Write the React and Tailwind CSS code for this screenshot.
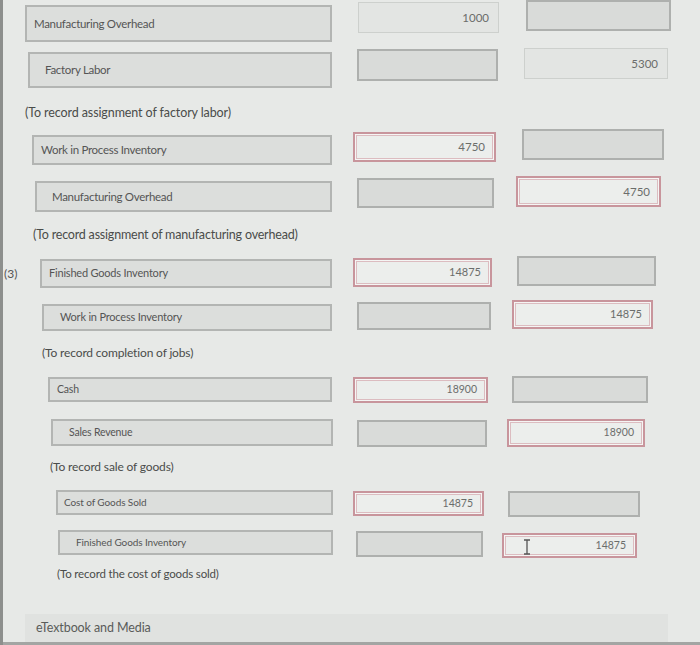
import React from "react";

const kinds = {
  grey: "bg-[#d9dbd9] border-2 border-[#aeb0ae]",
  light: "bg-[#e3e5e3] border border-[#cdd0cd]",
  red: "bg-[#eceeec] border-2 border-[#c8959c] shadow-[inset_0_0_0_1px_#f5f5f4,inset_0_0_0_2px_#dcbcc0]",
};

const Amount = ({ kind, value, cursor, className }) => (
  <div className={`relative shrink-0 flex items-center justify-end pr-[9px] text-[#6b6d6b] ${kinds[kind]} ${className}`}>
    {cursor && (
      <svg className="absolute left-[19px] top-[4px]" width="8" height="16" viewBox="0 0 8 16">
        <path d="M1 1h6M4 1v14M1 15h6" stroke="#555" strokeWidth="1.3" fill="none" />
      </svg>
    )}
    {value}
  </div>
);

const rows = [
  {
    top: "mt-0", lead: "w-[25px]", label: "Manufacturing Overhead",
    box: "mt-[5px] w-[307px] h-[37px] pl-[7px] text-[11.5px] tracking-[-0.3px]",
    debit: { kind: "light", value: "1000", cls: "mt-[2px] ml-[26px] w-[141px] h-[31px] text-[11.5px]" },
    credit: { kind: "grey", cls: "mt-0 ml-[27px] w-[145px] h-[31px]" },
  },
  {
    top: "mt-[6px]", lead: "w-[28px]", label: "Factory Labor",
    box: "mt-[4px] w-[304px] h-[36px] pl-[15px] text-[11.5px] tracking-[-0.3px]",
    debit: { kind: "grey", cls: "mt-[1px] ml-[25px] w-[141px] h-[32px]" },
    credit: { kind: "light", value: "5300", cls: "mt-0 ml-[26px] w-[144px] h-[31px] text-[11.5px]" },
    note: { text: "(To record assignment of factory labor)", cls: "mt-[17px] ml-[25px] text-[12.5px] tracking-[-0.1px] leading-[16px]" },
  },
  {
    top: "mt-[8px]", lead: "w-[32px]", label: "Work in Process Inventory",
    box: "mt-[6px] w-[300px] h-[30px] pl-[7px] text-[11.5px] tracking-[-0.3px]",
    debit: { kind: "red", value: "4750", cls: "mt-[3px] ml-[21px] w-[143px] h-[30px] text-[11.5px]" },
    credit: { kind: "grey", cls: "mt-0 ml-[26px] w-[142px] h-[31px]" },
  },
  {
    top: "mt-[11px]", lead: "w-[35px]", label: "Manufacturing Overhead",
    box: "mt-[5px] w-[297px] h-[31px] pl-[15px] text-[11.5px] tracking-[-0.3px]",
    debit: { kind: "grey", cls: "mt-[2px] ml-[25px] w-[137px] h-[30px]" },
    credit: { kind: "red", value: "4750", cls: "mt-0 ml-[22px] w-[145px] h-[31px] text-[11.5px]" },
    note: { text: "(To record assignment of manufacturing overhead)", cls: "mt-[15px] ml-[33px] text-[12.5px] tracking-[-0.2px] leading-[16px]" },
  },
  {
    top: "mt-[13px]", lead: "w-[40px]", mark: "(3)", label: "Finished Goods Inventory",
    box: "mt-[3px] w-[292px] h-[29px] pl-[7px] text-[11px] tracking-[-0.2px]",
    debit: { kind: "red", value: "14875", cls: "mt-[2px] ml-[21px] w-[139px] h-[29px] text-[11px]" },
    credit: { kind: "grey", cls: "mt-0 ml-[25px] w-[139px] h-[30px]" },
  },
  {
    top: "mt-[12px]", lead: "w-[42px]", label: "Work in Process Inventory",
    box: "mt-[4px] w-[290px] h-[27px] pl-[16px] text-[11px] tracking-[-0.2px]",
    debit: { kind: "grey", cls: "mt-[2px] ml-[25px] w-[134px] h-[28px]" },
    credit: { kind: "red", value: "14875", cls: "mt-0 ml-[21px] w-[141px] h-[29px] text-[11px]" },
    note: { text: "(To record completion of jobs)", cls: "mt-[14px] ml-[42px] text-[12px] tracking-[-0.15px] leading-[16px]" },
  },
  {
    top: "mt-[15px]", lead: "w-[48px]", label: "Cash",
    box: "mt-[1px] w-[284px] h-[25px] pl-[7px] text-[10.5px] tracking-[-0.2px]",
    debit: { kind: "red", value: "18900", cls: "mt-[1px] ml-[21px] w-[135px] h-[26px] text-[10.5px]" },
    credit: { kind: "grey", cls: "mt-0 ml-[24px] w-[136px] h-[27px]" },
  },
  {
    top: "mt-[16px]", lead: "w-[51px]", label: "Sales Revenue",
    box: "mt-0 w-[282px] h-[27px] pl-[16px] text-[10.5px] tracking-[-0.2px]",
    debit: { kind: "grey", cls: "mt-[1px] ml-[24px] w-[130px] h-[27px]" },
    credit: { kind: "red", value: "18900", cls: "mt-0 ml-[20px] w-[138px] h-[28px] text-[10.5px]" },
    note: { text: "(To record sale of goods)", cls: "mt-[12px] ml-[50px] text-[12px] tracking-[-0.15px] leading-[16px]" },
  },
  {
    top: "mt-[15px]", lead: "w-[56px]", label: "Cost of Goods Sold",
    box: "mt-0 w-[277px] h-[25px] pl-[6px] text-[10px] tracking-[-0.1px]",
    debit: { kind: "red", value: "14875", cls: "mt-[1px] ml-[20px] w-[131px] h-[25px] text-[10.5px]" },
    credit: { kind: "grey", cls: "mt-[1px] ml-[24px] w-[132px] h-[26px]" },
  },
  {
    top: "mt-[13px]", lead: "w-[58px]", label: "Finished Goods Inventory",
    box: "mt-0 w-[275px] h-[25px] pl-[16px] text-[10px] tracking-[-0.1px]",
    debit: { kind: "grey", cls: "mt-[1px] ml-[23px] w-[127px] h-[26px]" },
    credit: { kind: "red", value: "14875", cursor: true, cls: "mt-[3px] ml-[19px] w-[135px] h-[25px] text-[10.5px]" },
    note: { text: "(To record the cost of goods sold)", cls: "mt-[8px] ml-[57px] text-[11.5px] tracking-[-0.15px] leading-[15px]" },
  },
];

export default function App() {
  return (
    <div className="w-[700px] h-[645px] overflow-hidden bg-[#e7e9e7] border-l-[3px] border-[#8d8f8d] flex flex-col font-['Lato','Liberation_Sans',sans-serif]">
      <div className="-ml-[3px]">
        {rows.map((r, i) => (
          <div key={i}>
            <div className={`flex items-start ${r.top}`}>
              <div className={`${r.lead} shrink-0 self-stretch flex items-center pt-[4px] pl-[4px] text-[12px] text-[#555]`}>
                {r.mark}
              </div>
              <div className={`shrink-0 flex items-center bg-[#dcdedc] border-2 border-[#b3b5b3] text-[#555] ${r.box}`}>
                {r.label}
              </div>
              <Amount kind={r.debit.kind} value={r.debit.value} className={r.debit.cls} />
              <Amount kind={r.credit.kind} value={r.credit.value} cursor={r.credit.cursor} className={r.credit.cls} />
            </div>
            {r.note && <div className={`text-[#4a4c4a] ${r.note.cls}`}>{r.note.text}</div>}
          </div>
        ))}
        <div className="mt-[33px] ml-[25px] w-[643px] h-[28px] bg-[#e0e2e0] flex items-center pl-[11px] text-[12.5px] tracking-[-0.1px] text-[#5a5c5a]">
          eTextbook and Media
        </div>
      </div>
      <div className="mt-auto h-[3px] bg-[#a3a5a3]" />
    </div>
  );
}
